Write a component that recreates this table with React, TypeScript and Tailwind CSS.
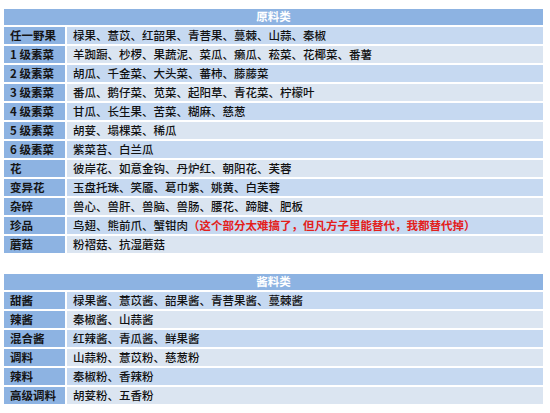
import React from 'react';

type Row = { label: string; items: string; note?: string };

const rawRows: Row[] = [
  { label: '任一野果', items: '椂果、薏苡、红韶果、青菩果、蔓棘、山蒜、秦椒' },
  { label: '1 级素菜', items: '羊踟蹰、杪椤、果蔬泥、菜瓜、癞瓜、菘菜、花椰菜、番薯' },
  { label: '2 级素菜', items: '胡瓜、千金菜、大头菜、蕃柿、藤藤菜' },
  { label: '3 级素菜', items: '番瓜、鹅仔菜、苋菜、起阳草、青花菜、柠檬叶' },
  { label: '4 级素菜', items: '甘瓜、长生果、苦菜、糊麻、慈葱' },
  { label: '5 级素菜', items: '胡荽、塌棵菜、稀瓜' },
  { label: '6 级素菜', items: '紫菜苔、白兰瓜' },
  { label: '花', items: '彼岸花、如意金钩、丹炉红、朝阳花、芙蓉' },
  { label: '变异花', items: '玉盘托珠、笑靥、葛巾紫、姚黄、白芙蓉' },
  { label: '杂碎', items: '兽心、兽肝、兽脑、兽肠、腰花、蹄腱、肥板' },
  {
    label: '珍品',
    items: '鸟翅、熊前爪、蟹钳肉',
    note: '（这个部分太难搞了，但凡方子里能替代，我都替代掉）',
  },
  { label: '蘑菇', items: '粉褶菇、抗湿蘑菇' },
];

const sauceRows: Row[] = [
  { label: '甜酱', items: '椂果酱、薏苡酱、韶果酱、青菩果酱、蔓棘酱' },
  { label: '辣酱', items: '秦椒酱、山蒜酱' },
  { label: '混合酱', items: '红辣酱、青瓜酱、鲜果酱' },
  { label: '调料', items: '山蒜粉、薏苡粉、慈葱粉' },
  { label: '辣料', items: '秦椒粉、香辣粉' },
  { label: '高级调料', items: '胡荽粉、五香粉' },
];

const RecipeTable = ({ title, rows }: { title: string; rows: Row[] }) => (
  <div className="flex flex-col gap-[2px] w-[539px]">
    <div className="h-[16px] bg-[#8db3e2] flex items-center justify-center text-white font-bold text-[11.5px] leading-none">
      {title}
    </div>
    {rows.map((row, i) => (
      <div key={row.label} className="grid grid-cols-[61px_1fr] gap-[2px] h-[17px]">
        <div className="bg-[#8db3e2] flex items-center pl-[6px] font-bold text-[11.5px] leading-none text-[#151515] whitespace-nowrap">
          {row.label}
        </div>
        <div
          className={`flex items-center pl-[6px] text-[11.5px] leading-none text-[#111111] font-medium whitespace-nowrap ${
            i % 2 === 0 ? 'bg-[#c6d9f1]' : 'bg-[#dbe5f1]'
          }`}
        >
          {row.items}
          {row.note && <span className="text-[#e3201b] font-bold">{row.note}</span>}
        </div>
      </div>
    ))}
  </div>
);

export default function App() {
  return (
    <div
      className="w-[550px] h-[413px] bg-white pt-[9px] pl-[4px] flex flex-col gap-[21px]"
      style={{ fontFamily: '"Noto Sans CJK SC", "Noto Sans", sans-serif' }}
    >
      <RecipeTable title="原料类" rows={rawRows} />
      <RecipeTable title="酱料类" rows={sauceRows} />
    </div>
  );
}
